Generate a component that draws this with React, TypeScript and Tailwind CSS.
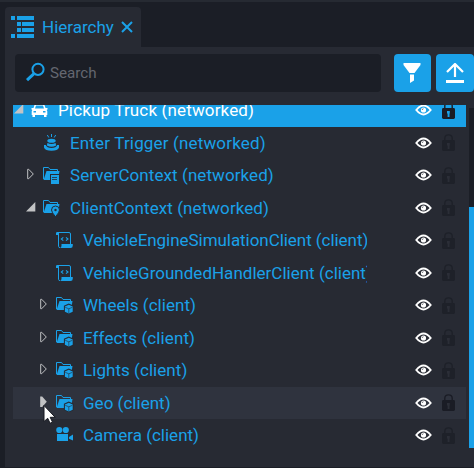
import type { ReactNode } from "react";

type Kind = "car" | "trigger" | "server" | "context" | "script" | "group" | "camera";
type Arrow = "open" | "closed" | "solid" | "none";

interface Item {
  label: string;
  kind: Kind;
  arrow: Arrow;
  depth: 0 | 1 | 2;
  tracking: string;
  state?: "selected" | "hover";
}

const items: Item[] = [
  { label: "Pickup Truck (networked)", kind: "car", arrow: "open", depth: 0, tracking: "tracking-[0.15px]", state: "selected" },
  { label: "Enter Trigger (networked)", kind: "trigger", arrow: "none", depth: 1, tracking: "tracking-[0.16px]" },
  { label: "ServerContext (networked)", kind: "server", arrow: "closed", depth: 1, tracking: "tracking-[0.08px]" },
  { label: "ClientContext (networked)", kind: "context", arrow: "open", depth: 1, tracking: "tracking-[0.07px]" },
  { label: "VehicleEngineSimulationClient (client)", kind: "script", arrow: "none", depth: 2, tracking: "tracking-[-0.05px]" },
  { label: "VehicleGroundedHandlerClient (client)", kind: "script", arrow: "none", depth: 2, tracking: "tracking-[0.01px]" },
  { label: "Wheels (client)", kind: "group", arrow: "closed", depth: 2, tracking: "tracking-[0.03px]" },
  { label: "Effects (client)", kind: "group", arrow: "closed", depth: 2, tracking: "tracking-[0.1px]" },
  { label: "Lights (client)", kind: "group", arrow: "closed", depth: 2, tracking: "tracking-[0.05px]" },
  { label: "Geo (client)", kind: "group", arrow: "solid", depth: 2, tracking: "tracking-[0.02px]", state: "hover" },
  { label: "Camera (client)", kind: "camera", arrow: "none", depth: 2, tracking: "tracking-[0px]" },
];

const indents = { 0: "pl-px", 1: "pl-[13px]", 2: "pl-[26px]" };

function Folder() {
  return (
    <>
      <path d="M.5 13V1.500h5L7 3.500h7.500V6" fill="none" stroke="currentColor" strokeWidth="1" />
      <path d="M3.500 5H16.500L15 14H.500Z" />
    </>
  );
}

const glyphs: Record<Kind, ReactNode> = {
  car: (
    <path
      fillRule="evenodd"
      d="M4.800 3h7.400q1 0 1.300 1l1 3h2v1.500l-.9.500q.7.600.7 1.600V14h-.8v2h-2.500v-2H4v2H1.500v-2H.700v-3.400Q.700 9.600 1.400 9L.5 8.500V7h2l1-3q.3-1 1.300-1ZM5 4.500 4 7.500h9l-1-3ZM2.500 10v1.500H5V10ZM12 10v1.500h2.500V10Z"
    />
  ),
  trigger: (
    <>
      <path d="M8.500 0v3M4.300 1l1.500 2.500M12.700 1l-1.500 2.500" stroke="currentColor" strokeWidth="1" />
      <ellipse cx="8.500" cy="6.800" rx="4.200" ry="2" />
      <path d="M4.400 9q4.100 2 8.200 0l.5 2.600q-4.600 2.400-9.200 0Z" />
      <path d="M1 11h1.800q1 3 5.700 3t5.700-3H16v2.500q-1.200 3.200-7.500 3.200T1 13.500Z" />
    </>
  ),
  server: (
    <>
      <Folder />
      <path d="M7 8h10v10H7Z" className="fill-[#272a33]" />
      <path d="M8 9h8v9H8Z" />
      <path d="M9 11.500h5M9 13.500h5" className="stroke-[#272a33]" strokeWidth=".8" />
    </>
  ),
  context: (
    <>
      <Folder />
      <path d="M12.500 17.800Q8.500 13.200 8.500 11a4 4 0 0 1 8 0q0 2.200-4 6.800Z" className="stroke-[#272a33]" strokeWidth="1" />
      <circle cx="12.500" cy="11" r="1.200" className="fill-[#272a33]" />
    </>
  ),
  script: (
    <>
      <path d="M2.500 4V1.500H13q1.500 0 1.500 1.500v10M2.500 4v11.500q0 1 1.500 1" fill="none" stroke="currentColor" strokeWidth="1" />
      <path d="M0 2Q0 1 1.500 1H3v3H0ZM4 17q1.500-.5 1.500-2.500V13h11.300v1.500Q16.800 17 14.500 17Z" />
      <path d="M7.300 6.300 5.300 8l2 1.700M10 6.300 12 8l-2 1.700" fill="none" stroke="currentColor" strokeWidth="1.100" />
    </>
  ),
  group: (
    <>
      <Folder />
      <path d="m12.800 7.600 4.900 2.200v6.300l-4.900 2.300-4.900-2.300V9.800Z" className="fill-[#272a33]" />
      <path d="m12.800 8.700 3.900 1.700v5.300l-3.900 1.800-3.900-1.800v-5.300Z" />
      <path d="m9.200 11.300 3.600 1.500 3.600-1.500M12.800 12.800v4.500" fill="none" className="stroke-[#272a33]" strokeWidth=".6" />
    </>
  ),
  camera: (
    <>
      <circle cx="3.300" cy="4" r="3.100" />
      <circle cx="9.800" cy="4" r="3.100" />
      <path d="M1 8h11v7H1ZM13 11l4-2.500v6L13 12.800Z" />
    </>
  ),
};

function Disclosure({ arrow }: { arrow: Arrow }) {
  return (
    <svg viewBox="0 0 17 18" className="h-[18px] w-[17px] shrink-0 text-[#c2c3c5]" fill="currentColor">
      {arrow === "open" && <path d="M9.300 3v9.500H0Z" />}
      {arrow === "closed" && <path d="M1.700 3.300h1L7.300 8l-4.600 4.700h-1Z" fill="none" stroke="currentColor" strokeWidth="1" />}
      {arrow === "solid" && <path d="M1.200 2.500h2L7.800 7.800 3.200 13h-2Z" />}
    </svg>
  );
}

function Eye() {
  return (
    <svg viewBox="0 0 17 12" className="h-3 w-[17px] shrink-0" fill="none">
      <path d="M1.300 6Q8.500-2.900 15.700 6 8.500 14.900 1.300 6Z" stroke="white" strokeWidth="1.900" />
      <circle cx="8.500" cy="6" r="2.600" fill="white" />
      <path d="M7.200 6q0-1.300 1.300-1.300" stroke="#444750" strokeWidth=".7" />
    </svg>
  );
}

function Lock({ state }: { state?: Item["state"] }) {
  const color = state ? "text-[#1a1c25]" : "text-[#1e2129]";
  return (
    <svg viewBox="0 0 13 17" className={`h-[17px] w-[13px] shrink-0 ${color}`} fill="none">
      <path d="M2.800 8V4.200q0-3.300 3.700-3.300t3.700 3.300V8" stroke="currentColor" strokeWidth="1.400" />
      <rect y="6" width="13" height="11" rx="1.400" fill="currentColor" />
      <path d="M5 9h2.800v2.400h-.3V15H5.600v-3.600H5Z" className={state === "selected" ? "fill-[#1aa1e8]" : "fill-[#2b2e37]"} />
    </svg>
  );
}

function Row({ label, kind, arrow, depth, tracking, state }: Item) {
  const background = state === "selected" ? "bg-[#1aa1e8] text-white" : state === "hover" ? "bg-[#2f333e]" : "";
  return (
    <div className={`flex h-[32.5px] shrink-0 items-center ${background}`}>
      <div className={`flex w-[354px] items-center overflow-hidden ${indents[depth]}`}>
        <Disclosure arrow={arrow} />
        <svg viewBox="0 0 18 18" className="h-[18px] w-[18px] shrink-0" fill="currentColor">
          {glyphs[kind]}
        </svg>
        <span className={`ml-[9px] whitespace-nowrap text-[17px] leading-6 ${tracking}`}>{label}</span>
      </div>
      <div className="ml-[48px] flex items-center gap-[10px]">
        <Eye />
        <Lock state={state} />
      </div>
    </div>
  );
}

export default function App() {
  return (
    <div className="relative flex h-[468px] w-[474px] flex-col overflow-hidden border-t-2 border-[#262a32] bg-[#1b1e26] pl-[5px] pt-[5px] font-['Roboto',sans-serif] text-[#1aa1e8]">
      <header className="flex h-10 w-[136px] shrink-0 items-center rounded-t bg-[#272a33]">
        <svg viewBox="0 0 24 24" className="ml-[6px] h-6 w-6 shrink-0" fill="currentColor">
          <path d="M0 1h4v4H0ZM0 19h4v4H0ZM6 1h17v4H6ZM6 7h4v4H6ZM11 7h12v4H11ZM6 13h4v4H6ZM11 13h12v4H11ZM6 19h17v4H6Z" />
        </svg>
        <span className="ml-[7px] text-[17px] leading-6">Hierarchy</span>
        <svg viewBox="0 0 12 12" className="ml-[7.5px] h-3 w-3 shrink-0" stroke="currentColor" strokeWidth="2">
          <path d="m1 1 10 10M11 1 1 11" />
        </svg>
      </header>
      <main className="flex h-[420px] shrink-0 flex-col bg-[#272a33] pt-[7px]">
        <div className="flex h-[38px] shrink-0 pl-[10px]">
          <div className="flex w-[366px] items-center rounded bg-[#1b1e26] pl-[11px]">
            <svg viewBox="0 0 20 20" className="mb-[3px] h-5 w-5" fill="none" stroke="currentColor">
              <circle cx="12" cy="7.300" r="5.600" strokeWidth="2" />
              <path d="m8 11.700-7 6.500" strokeWidth="3" />
            </svg>
            <span className="ml-[4px] text-[15.200px] text-[#646770]">Search</span>
          </div>
          <button className="ml-[13px] flex w-[37px] items-center justify-center rounded bg-[#1aa1e8]">
            <svg viewBox="0 0 18 20" className="mr-[2px] h-5 w-[18px]" fill="white">
              <path d="M.5 0h17v2l-6 8h-5l-6-8ZM7 11.500h4v6L7 20Z" />
            </svg>
          </button>
          <button className="ml-[5px] flex w-[38px] items-center justify-center rounded bg-[#1aa1e8]">
            <svg viewBox="0 0 18 20" className="h-5 w-[18px]" fill="none" stroke="white">
              <path d="M9 14V2M1 9l8-8 8 8" strokeWidth="2.200" />
              <path d="M0 18.500h18" strokeWidth="3" />
            </svg>
          </button>
        </div>
        <div className="flex pl-2 pt-[13px]">
          <div className="flex h-[362px] w-[453px] flex-col justify-end overflow-hidden pb-[15.5px]">
            {items.map((item) => (
              <Row key={item.label} {...item} />
            ))}
          </div>
          <div className="ml-[3px] mt-[3px] flex h-[340px] w-[5px] flex-col justify-end bg-[#1b1e26]">
            <div className="h-[241px] bg-[#1aa1e8]" />
          </div>
        </div>
      </main>
      <svg viewBox="0 0 14 21" className="absolute left-[42.5px] top-[402px] h-[21px] w-[14px]">
        <path d="M1 1.500v16l3.700-3.200 2.400 5 2.400-1.200-2.300-4.800h5Z" fill="white" stroke="#161820" strokeWidth="1" />
      </svg>
    </div>
  );
}
